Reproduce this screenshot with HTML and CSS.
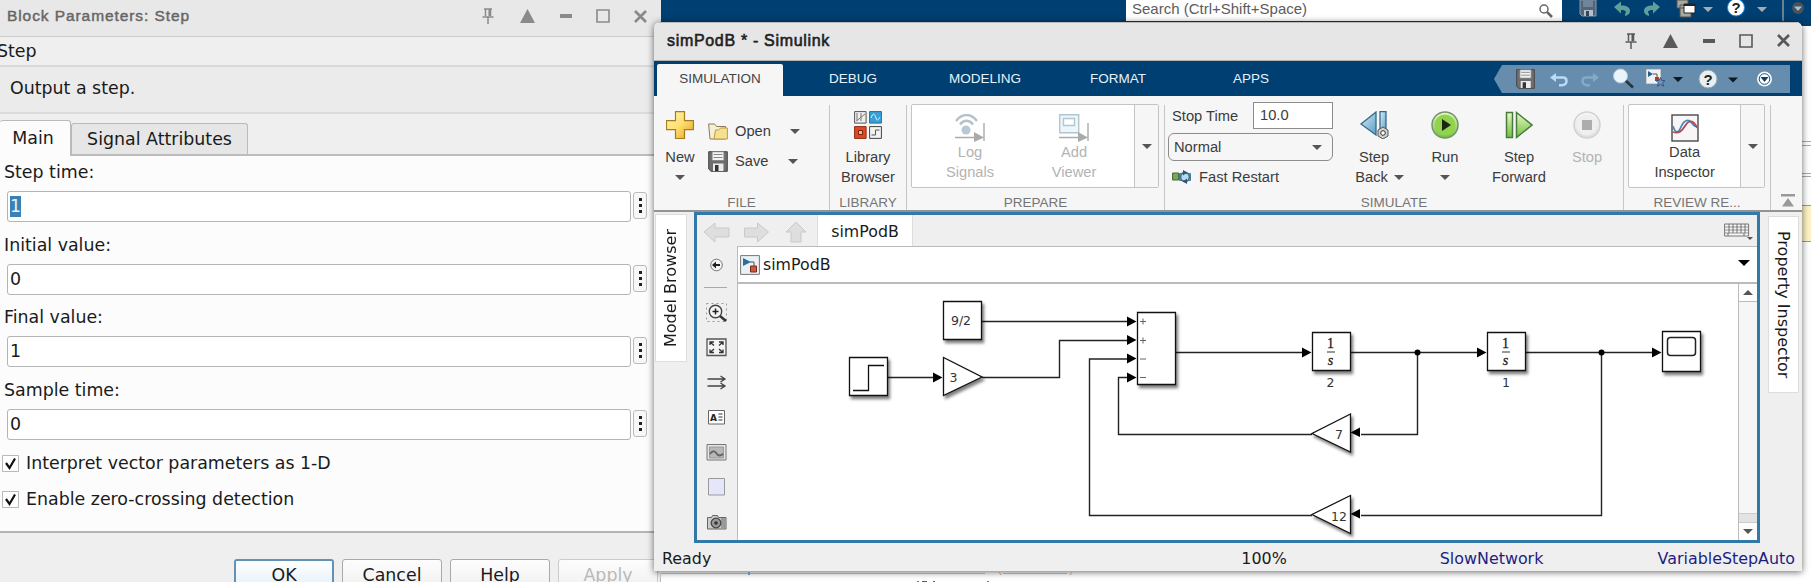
FILE: index.html
```html
<!DOCTYPE html>
<html lang="en">
<head>
<meta charset="utf-8">
<title>simPodB * - Simulink</title>
<link rel="stylesheet" href="styles.css">
</head>
<body>
<svg class="defs" width="0" height="0">
  <defs>
    <linearGradient id="gold" x1="0" y1="0" x2="1" y2="1"><stop offset="0" stop-color="#fff6b8"/><stop offset=".5" stop-color="#ffdf70"/><stop offset="1" stop-color="#dca020"/></linearGradient>
    <linearGradient id="green" x1="0" y1="0" x2="0" y2="1"><stop offset="0" stop-color="#eaf7c8"/><stop offset="1" stop-color="#6fc040"/></linearGradient>
    <linearGradient id="blue" x1="0" y1="0" x2="1" y2="1"><stop offset="0" stop-color="#d8eef8"/><stop offset="1" stop-color="#5a9cc4"/></linearGradient>
    <linearGradient id="grey" x1="0" y1="0" x2="0" y2="1"><stop offset="0" stop-color="#f8f8f8"/><stop offset="1" stop-color="#dcdcdc"/></linearGradient>
    <symbol id="pin" viewBox="0 0 12 16"><path d="M2 1h8M3.500 1v7M8.500 1v7M7.200 1v7M0.500 9h11M6 9v7" fill="none" stroke="currentColor" stroke-width="1.500"/></symbol>
    <symbol id="up" viewBox="0 0 15 14"><path d="M7.500 0L15 14H0z" fill="currentColor"/></symbol>
    <symbol id="min" viewBox="0 0 12 4"><path d="M0 0h12v4H0z" fill="currentColor"/></symbol>
    <symbol id="max" viewBox="0 0 14 14"><path d="M1 1h12v12H1z" fill="none" stroke="currentColor" stroke-width="1.600"/></symbol>
    <symbol id="close" viewBox="0 0 13 13"><path d="M1 1l11 11M12 1L1 12" fill="none" stroke="currentColor" stroke-width="2.700"/></symbol>
    <symbol id="floppy" viewBox="0 0 20 21"><path d="M.7.7h18.600v19.600H3L.7 18z" fill="#6d6d72" stroke="#444"/><path d="M4 .7h12v9H4z" fill="#f3f3f3" stroke="#777"/><path d="M5.500 3.500h9M5.500 6.500h9" stroke="#888"/><path d="M5 12.500h10.500v7.500H5z" fill="#ececec"/><path d="M7 14h3.500v6H7z" fill="#333"/></symbol>
    <symbol id="undo" viewBox="0 0 18 14"><path d="M5 5h8c2.500 0 3.500 1.500 3.500 3.500S15 12.800 12 12.800H9" fill="none" stroke="currentColor" stroke-width="2.500"/><path d="M0 5L6 .5v9z" fill="currentColor"/></symbol>
  </defs>
</svg>

<div class="desktop">
  <header class="host-bar">
    <div class="host-search"><span>Search (Ctrl+Shift+Space)</span>
      <svg width="14" height="14" viewBox="0 0 14 14"><circle cx="5" cy="5" r="4" fill="none" stroke="#666" stroke-width="1.500"/><path d="M8 8l5 5" stroke="#666" stroke-width="2.500"/></svg>
    </div>
    <svg class="host-icons" width="249" height="26" viewBox="1562 0 249 26">
      <path d="M1580 0h16v16h-14l-2-2z" fill="#50667c" stroke="#8d99a5"/><path d="M1583 0h10v7h-10z" fill="#71859a"/><path d="M1584 10h9v6h-9z" fill="#b7c0c9"/><path d="M1586 11h3v5h-3z" fill="#31475e"/>
      <path d="M1614 7l7-5.500v4c6 0 9 2 9 5.500 0 2.500-2 4.500-5 5v-2c2-2 1-4-4-4v3.500z" fill="#5fa09b"/>
      <path d="M1660 7l-7-5.500v4c-6 0-9 2-9 5.500 0 2.500 2 4.500 5 5v-2c-2-2-1-4 4-4v3.500z" fill="#5fa09b"/>
      <path d="M1677 0h11v8h-11zM1680 5h11v12h-11z" fill="#a9a9a0" stroke="#555"/><path d="M1684 4h11v9h-11z" fill="#fff" stroke="#222"/><path d="M1684 4h11v2h-11z" fill="#222"/>
      <path d="M1703 7h10l-5 5zM1757 7h10l-5 5z" fill="#a9aaa9"/>
      <circle cx="1736" cy="7.500" r="8.500" fill="#fff" stroke="#168ce0"/><text x="1736" y="12.500" class="qm">?</text>
      <path d="M1783 0v21" stroke="#8d98a2" stroke-width="1.500"/>
      <circle cx="1798" cy="8" r="6" fill="#4a5158"/><path d="M1794 6.500h8l-4 4.500z" fill="#9fc3d8"/>
    </svg>
  </header>
  <div class="host-right"><i></i><i></i><i></i><b></b></div>
  <svg class="host-bottom" width="450" height="11" viewBox="654 571 450 11">
    <path d="M660.500 571v11" stroke="#bbb"/>
    <path d="M661 573.500h324M1003 573.500h64" stroke="#86a5c0"/><path d="M748 572h2v3h-2z" fill="#5d8fc0"/>
    <path d="M999 572l2 3M1072 572l-2 3" stroke="#b98a68"/>
    <path d="M917 581.500h2M987 581.500h2" stroke="#b3673f"/><path d="M922 581.500h5M933 581.500h2" stroke="#1f6fb5"/>
  </svg>

  <section class="dialog">
    <div class="dlg-title"><span>Block Parameters: Step</span>
      <div class="win-icons">
        <svg width="12" height="16"><use href="#pin"/></svg><svg width="15" height="14"><use href="#up"/></svg><svg width="12" height="4"><use href="#min"/></svg><svg width="14" height="14"><use href="#max"/></svg><svg width="13" height="13"><use href="#close"/></svg>
      </div>
    </div>
    <div class="dlg-kind">Step</div>
    <div class="dlg-desc">Output a step.</div>
    <div class="dlg-tabs"><span class="dtab active">Main</span><span class="dtab">Signal Attributes</span></div>
    <div class="dlg-form">
      <label>Step time:</label><div class="row"><span class="field"><mark>1</mark></span><span class="more"><i></i><i></i><i></i></span></div>
      <label>Initial value:</label><div class="row"><span class="field">0</span><span class="more"><i></i><i></i><i></i></span></div>
      <label>Final value:</label><div class="row"><span class="field">1</span><span class="more"><i></i><i></i><i></i></span></div>
      <label>Sample time:</label><div class="row"><span class="field">0</span><span class="more"><i></i><i></i><i></i></span></div>
      <div class="check"><svg width="17" height="17" viewBox="0 0 17 17"><path d="M.5.5h16v16H.5z" fill="#fff" stroke="#b9b9b9"/><path d="M4 8l3.500 5L13 3.500" fill="none" stroke="#111" stroke-width="2.200"/></svg>Interpret vector parameters as 1-D</div>
      <div class="check"><svg width="17" height="17" viewBox="0 0 17 17"><path d="M.5.5h16v16H.5z" fill="#fff" stroke="#b9b9b9"/><path d="M4 8l3.500 5L13 3.500" fill="none" stroke="#111" stroke-width="2.200"/></svg>Enable zero-crossing detection</div>
    </div>
    <div class="dlg-buttons"><span class="btn primary"><u>O</u>K</span><span class="btn"><u>C</u>ancel</span><span class="btn"><u>H</u>elp</span><span class="btn disabled"><u>A</u>pply</span></div>
  </section>

  <section class="sim">
    <div class="sim-title"><span>simPodB * - Simulink</span>
      <div class="win-icons">
        <svg width="12" height="16"><use href="#pin"/></svg><svg width="15" height="14"><use href="#up"/></svg><svg width="12" height="4"><use href="#min"/></svg><svg width="14" height="14"><use href="#max"/></svg><svg width="13" height="13"><use href="#close"/></svg>
      </div>
    </div>
    <nav class="tabs">
      <span class="tab active">SIMULATION</span><span class="tab t-debug">DEBUG</span><span class="tab t-model">MODELING</span><span class="tab t-format">FORMAT</span><span class="tab t-apps">APPS</span>
      <svg class="quick" width="296" height="28" viewBox="1494 65 296 28">
        <path d="M1494 79l8-14h288v28h-288z" fill="#668dae"/>
        <use href="#floppy" x="1515" y="69" width="21" height="20"/>
        <g color="#b9dcf5"><use href="#undo" x="1550" y="72" width="18" height="15"/></g>
        <g color="#82abc9" transform="translate(3181 0) scale(-1 1)"><use href="#undo" x="1582" y="72" width="18" height="15"/></g>
        <path d="M1625 80l8 7.500" stroke="#27333d" stroke-width="2.600"/><circle cx="1620.500" cy="76" r="7" fill="#e9f4fb" stroke="#b8c9d5"/>
        <path d="M1646.500 69.500h14v14h-14z" fill="#f1f1f1" stroke="#ccc"/><path d="M1648 71l5 3-5 3z" fill="#285c8a"/><path d="M1653 74h4v3" fill="none" stroke="#555"/><path d="M1655 77h4v4h-4z" fill="#b43a24"/><path d="M1660.500 77.500l1.300 3h3.200l-2.300 2.300 1 3.500-3.200-2-3.200 2 1-3.500-2.300-2.300h3.200z" fill="#7093b7" stroke="#36597e"/>
        <path d="M1673 77h10l-5 5zM1728 77.500h10l-5 5z" fill="#101820"/>
        <circle cx="1708" cy="79" r="9" fill="#e8eef2" stroke="#91a8b9"/><text x="1708" y="84.500" class="qm">?</text>
        <circle cx="1764.500" cy="79" r="7.500" fill="#f2f8fc"/><circle cx="1764.500" cy="79" r="5.300" fill="#fff" stroke="#19567f" stroke-width="1"/><path d="M1760.500 77h8l-4 5z" fill="#123f62"/>
      </svg>
    </nav>

    <div class="ribbon">
      <div class="group g-file">
        <div class="tools">
          <div class="tool new"><svg width="28" height="28" viewBox="0 0 28 28"><path d="M9.500 .7h9v9h9v9h-9v8.800h-9v-8.800h-9v-9h9z" fill="url(#gold)" stroke="#a77b20" stroke-width="1.200"/></svg><span>New</span><i class="caret"></i></div>
          <div class="lines">
            <div><svg width="20" height="17" viewBox="0 0 20 17"><path d="M.6 1h6l2 2.500h9V16H2z" fill="#f5efd6" stroke="#8b7b55"/><path d="M6 16L7.500 7h3l2-2h6.900v11z" fill="#f4e08e" stroke="#c09a45"/></svg><span>Open</span><i class="caret"></i></div>
            <div><svg width="20" height="21"><use href="#floppy"/></svg><span>Save</span><i class="caret c2"></i></div>
          </div>
        </div>
        <div class="glabel">FILE</div>
      </div>
      <div class="group g-lib">
        <div class="tools"><div class="tool lib"><svg width="28" height="28" viewBox="0 0 28 28"><path d="M.6.6h11.500v11.500H.6z" fill="#eee" stroke="#555"/><path d="M3 2v8M2.500 10L11 3M7 2v8" stroke="#777" fill="none"/><path d="M15.600.6h11.800v11.500H15.600z" fill="#38a0d6" stroke="#1f6f9d"/><path d="M17 7c2-6 4-4 5 0s3 1 4-1" fill="none" stroke="#dff3ff"/><path d="M.6 15.600h11.500v11.800H.6z" fill="#dc4a24" stroke="#8f2b12"/><path d="M4.500 19.500h4v4h-4z" fill="#f6b49b" stroke="#7b220c"/><path d="M15.600 15.600h11.800v11.800H15.600z" fill="#f3f3f3" stroke="#444"/><path d="M17.500 24h4v-5h4" fill="none" stroke="#555"/></svg><span>Library<br>Browser</span></div></div>
        <div class="glabel">LIBRARY</div>
      </div>
      <div class="group g-prep">
        <div class="gallery">
          <div class="gitem g-log"><svg width="30" height="28" viewBox="0 0 30 28"><path d="M1 7c6-8 15-8 21 0M5 10.500c4-5 9-5 13 0" fill="none" stroke="#b4c0cb" stroke-width="2.400"/><circle cx="11" cy="16" r="4.500" fill="#b9c8d5"/><path d="M0 23.500h24M29 9v18" stroke="#aaa" stroke-width="1.400"/><path d="M19 18l10 5.500-10 4.500z" fill="#aaa"/></svg><span>Log<br>Signals</span></div>
          <div class="gitem g-add"><svg width="30" height="28" viewBox="0 0 30 28"><path d="M.7.7h19v18H.7z" fill="#eef6fa" stroke="#b0c6d2" stroke-width="1.400"/><path d="M4.500 4.500h11v7h-11z" fill="#fff" stroke="#b0c6d2" stroke-width="1.400"/><path d="M0 23.500h24M29 9v18" stroke="#aaa" stroke-width="1.400"/><path d="M19 18l10 5.500-10 4.500z" fill="#aaa"/></svg><span>Add<br>Viewer</span></div>
          <div class="gmore"><i class="caret"></i></div>
        </div>
        <div class="glabel">PREPARE</div>
      </div>
      <div class="group g-sim">
        <div class="tools">
          <div class="settings">
            <div class="stop-time"><span>Stop Time</span><span class="time-in">10.0</span></div>
            <div class="mode"><span>Normal</span><i class="caret"></i></div>
            <div class="fast"><svg width="21" height="14" viewBox="0 0 21 14"><path d="M.6 3h6v7h-6z" fill="#78a95b" stroke="#3c6630"/><path d="M7.500 3.500h11v7h-11z" fill="#b7dbed" stroke="#4e7a96"/><circle cx="13" cy="7" r="4.500" fill="none" stroke="#3f6f92" stroke-width="1.800"/><path d="M11 0l4 2.500-4 3zM15 14l-4-2.500 4-3z" fill="#2d5672"/></svg><span>Fast Restart</span></div>
          </div>
          <div class="tool step-back"><svg width="30" height="28" viewBox="0 0 30 28"><path d="M17 1v23L2 13z" fill="url(#blue)" stroke="#366a88" stroke-width="1.300"/><path d="M21 .7h6v22h-6z" fill="url(#blue)" stroke="#366a88" stroke-width="1.300"/><path d="M24 16l5 3v6l-5 3-5-3v-6z" fill="#d0d0d0" stroke="#555"/><circle cx="24" cy="22" r="2.300" fill="#fff" stroke="#333"/></svg><span>Step</span><span class="with-caret">Back<i class="caret"></i></span></div>
          <div class="tool run"><svg width="28" height="28" viewBox="0 0 28 28"><circle cx="14" cy="14" r="13" fill="url(#green)" stroke="#77936a" stroke-width="1.500"/><circle cx="14" cy="14" r="10.500" fill="#92d34c"/><path d="M11 8l9 6-9 6z" fill="#1c2517"/></svg><span>Run</span><i class="caret"></i></div>
          <div class="tool fwd"><svg width="28" height="28" viewBox="0 0 28 28"><path d="M1.500 1.500h6v25h-6zM11.500 1.500v25L27 14z" fill="url(#green)" stroke="#477c3e" stroke-width="1.500"/></svg><span>Step<br>Forward</span></div>
          <div class="tool stop"><svg width="28" height="28" viewBox="0 0 28 28"><circle cx="14" cy="14" r="13" fill="url(#grey)" stroke="#d2d2d2" stroke-width="1.500"/><circle cx="14" cy="14" r="10.500" fill="#efefef"/><path d="M9 9h10v10H9z" fill="#adadad"/></svg><span>Stop</span></div>
        </div>
        <div class="glabel">SIMULATE</div>
      </div>
      <div class="group g-rev">
        <div class="gallery">
          <div class="gitem g-data"><svg width="28" height="28" viewBox="0 0 28 28"><path d="M1 1h26v26H1z" fill="#f7f5f5" stroke="#555" stroke-width="1.500"/><path d="M2 12c2 7 5 8 8 1s7-8 10-5 3 5 6 4" fill="none" stroke="#4689bc" stroke-width="1.800"/><path d="M2 18c6 2 9-1 12-6s8-8 12 2" fill="none" stroke="#b44b51" stroke-width="1.800"/></svg><span>Data<br>Inspector</span></div>
          <div class="gmore"><i class="caret"></i></div>
        </div>
        <div class="glabel">REVIEW RE...</div>
      </div>
      <svg class="collapse" width="14" height="13" viewBox="0 0 14 13"><path d="M0 0h14v2.500H0zM7 4l6 8.500H1z" fill="#999"/></svg>
    </div>

    <div class="work">
      <aside class="side left"><span>Model Browser</span></aside>
      <main class="editor">
        <div class="nav-row">
          <svg width="120" height="31" viewBox="697 215 120 31"><g fill="#dedede" stroke="#c9c9c9"><path d="M704 232l11-9v5h14v9h-14v5zM768.500 232l-11-9v5h-13v9h13v5zM796 222l10 10h-5v10h-10v-10h-5z"/></g></svg>
          <span class="file-tab">simPodB</span>
          <svg class="keys" width="30" height="18" viewBox="0 0 30 18"><path d="M.6 1h24v12H.6z" fill="#f5f5f5" stroke="#777"/><path d="M1 4h23M1 7h23M1 10h23" stroke="#888" stroke-width=".9"/><path d="M5 1v9M9 1v9M13 1v9M17 1v9M21 1v9M4 10v3M20 10v3" stroke="#666" stroke-width=".9"/><path d="M23 14h6l-3 3z" fill="#555"/></svg>
        </div>
        <div class="edit-body">
          <svg class="palette" width="40" height="293" viewBox="697 246 40 293" fill="none">
            <circle cx="716.500" cy="265" r="5.800" fill="#f6f6f6" stroke="#777"/><path d="M720 265h-5" stroke="#222" stroke-width="2"/><path d="M712 265l4-3.500v7z" fill="#222"/>
            <path d="M704 287.500h23" stroke="#aaa"/>
            <path d="M706.500 303.500h20v18h-20z" stroke="#999" stroke-dasharray="2 3"/><circle cx="715.500" cy="311.500" r="6.200" fill="#f5f5f5" stroke="#444" stroke-width="1.400"/><path d="M712.500 311.500h6M715.500 308.500v6" stroke="#222" stroke-width="1.500"/><path d="M720 316l6 5" stroke="#333" stroke-width="2.400"/>
            <path d="M707 339h19v16.500h-19z" fill="#f4f4f4" stroke="#555" stroke-width="1.300"/><path d="M710 345v-3h4M710 342l4 3.500M723 345v-3h-4M723 342l-4 3.500M710 349.500v3h4M710 352.500l4-3.500M723 349.500v3h-4M723 352.500l-4-3.500" stroke="#333" stroke-width="1.300"/>
            <path d="M707.500 379h17M707.500 386h17M720.500 376l4.500 3-4.500 3M720.500 383l4.500 3-4.500 3" stroke="#444" stroke-width="1.300"/>
            <path d="M708.500 410.500h16v13.500h-16z" fill="#fff" stroke="#666"/><text x="710" y="421" class="aa">A</text><path d="M718.500 414h4M718.500 417h4M718.500 420h4" stroke="#333"/>
            <path d="M707 444.500h19v15.500h-19z" fill="#e5e5e5" stroke="#777"/><path d="M709.500 447h14v11h-14z" fill="#b8b8b8" stroke="#999"/><path d="M710 454c3-4 5-3 7 0s4 1 6 0" stroke="#666" stroke-width="2"/>
            <path d="M708.500 478.500h16v16.500h-16z" fill="#e6e6fa" stroke="#999"/>
            <path d="M707.500 517.500h4l1-2h5l1 2h7.500v11.500h-18.500z" fill="#ccc" stroke="#666"/><path d="M721 518h4v10h-4z" fill="#999"/><circle cx="716" cy="523" r="4.800" fill="#999" stroke="#444" stroke-width="1.300"/><circle cx="716" cy="523" r="1.800" fill="#333"/>
          </svg>
          <div class="sheet">
            <div class="crumb">
              <svg width="20" height="20" viewBox="0 0 20 20"><path d="M.6.6h18.800v18.800H.6z" fill="#eaf2f6" stroke="#777"/><path d="M3 3l8 4-8 4z" fill="#2c6f9f"/><path d="M10 7h4v4" fill="none" stroke="#555"/><path d="M10.500 11h6v6h-6z" fill="#cc5a3f" stroke="#782a17"/></svg>
              <span>simPodB</span><i class="caret black"></i>
            </div>
            <div class="canvas-row">
              <svg class="canvas" width="1000" height="256" viewBox="738 284 1000 256">
                <g class="wires">
                  <path d="M982 321.500h146M888 377.500h46M982 377.500h77.500v-37h68M1176 352.500h128M1351 352.500h128M1526 352.500h128M1417.500 352.500v82H1361M1601.500 352.500v163H1361M1312 434.500h-193.500v-57h10M1312 515.500H1089.500V359h38"/>
                </g>
                <g fill="#000">
                  <path d="M1127 316.500l9.500 5-9.500 5zM1127 335l9.500 5-9.500 5zM1127 353.500l9.500 5-9.500 5zM1127 372.500l9.500 5-9.500 5zM933 372.500l9.500 5-9.500 5zM1302 347.500l9.500 5-9.500 5zM1477 347.500l9.500 5-9.500 5zM1652 347.500l9.500 5-9.500 5zM1360 427.500l-9.500 5 9.500 4.500zM1360 509l-9.500 5 9.500 4.500z"/>
                  <circle cx="1417.500" cy="352.500" r="3"/><circle cx="1601.500" cy="352.500" r="3"/>
                </g>
                <g class="blocks">
                  <path d="M943.500 301.500h38v38h-38z"/><path d="M849.500 357.500h38v38h-38z"/><path d="M943.500 357.500v38L982 377z"/>
                  <path d="M1137.500 312.500h38v72h-38z"/><path d="M1312.500 332.500h38v38h-38z"/><path d="M1487.500 332.500h38v38h-38z"/><path d="M1662.500 331.500h38v40h-38z"/>
                  <path d="M1350.500 414v38L1312 433.500z"/><path d="M1350.500 495.500v38L1312 514.500z"/>
                </g>
                <path d="M853 390.500h15.500v-25H884" fill="none" stroke="#111" stroke-width="1.300"/>
                <rect x="1667.500" y="337.500" width="28" height="18" rx="3" fill="#fff" stroke="#222" stroke-width="1.500"/>
                <path d="M1327 352h8M1502 352h8" stroke="#333"/>
                <path d="M1140 321.500h6M1143 318.500v6M1140 340.500h6M1143 337.500v6M1140 359h6M1140 377.500h6" stroke="#666"/>
                <g class="btext"><text x="961" y="324.500">9/2</text><text x="953.500" y="382">3</text><text x="1330.500" y="387">2</text><text x="1506" y="387">1</text><text x="1339" y="439">7</text><text x="1339" y="520.500">12</text></g>
                <g class="frac"><text x="1330.500" y="347.500">1</text><text x="1505.500" y="347.500">1</text><text x="1330.500" y="364.500" class="it">s</text><text x="1505.500" y="364.500" class="it">s</text></g>
              </svg>
              <div class="scroll"><span class="sb"><i class="tri up"></i></span><span class="track"></span><span class="grip"></span><span class="sb"><i class="tri"></i></span></div>
            </div>
          </div>
        </div>
      </main>
      <aside class="side right"><span>Property Inspector</span></aside>
    </div>
    <footer class="status"><span class="ready">Ready</span><span class="zoom">100%</span><span class="link net">SlowNetwork</span><span class="link">VariableStepAuto</span></footer>
  </section>
</div>
</body>
</html>
```
FILE: styles.css
```css
* { box-sizing: border-box; }
body { margin: 0; overflow: hidden; font-family: "DejaVu Sans", sans-serif; color: #1a1a1a; }
svg { display: block; flex: none; }
.defs { position: absolute; }
.desktop { position: relative; width: 1811px; height: 582px; overflow: hidden; background: #fff; }
.qm { font: bold 15px "Liberation Sans", sans-serif; text-anchor: middle; fill: #222; }

/* Host application behind the windows */
.host-bar { height: 26px; margin-left: 661px; background: #003f72; display: flex; align-items: flex-start; }
.host-search { margin-left: 465px; width: 436px; height: 21px; background: #fff; display: flex; align-items: flex-start; justify-content: space-between; padding: 0 9px 0 6px; font: 15px/18px "Liberation Sans", sans-serif; color: #5c5c5c; }
.host-search svg { margin-top: 4px; }
.host-right { margin-left: 1802px; display: flex; flex-direction: column; padding-top: 115px; }
.host-right i { height: 29px; border: 1px solid #aaa; border-width: 1px 0; margin-bottom: 2px; }
.host-right i:first-child { height: 1px; border-bottom: 0; margin-bottom: 3px; }
.host-right i:nth-child(3) { height: 29px; border-bottom: 0; margin-bottom: 0; }
.host-right b { height: 37px; background: #fdf3c4; border: 1px solid #999; border-width: 1px 0; }
.host-bottom { position: absolute; left: 654px; top: 571px; z-index: 2; }

/* Block parameters dialog */
.dialog { position: absolute; left: 0; top: 0; width: 661px; height: 582px; background: #efefef; display: flex; flex-direction: column; font-size: 17.400px; }
.dlg-title { height: 37px; flex: none; background: #e8e8e8; border-bottom: 1px solid #ccc; display: flex; align-items: center; justify-content: space-between; padding: 0 14px 4px 7px; font: 15.500px "Liberation Sans", sans-serif; color: #666; letter-spacing: .92px; -webkit-text-stroke: .45px #666; }
.win-icons { display: flex; align-items: center; gap: 25px; color: #8a8a8a; }
.win-icons svg:first-child { margin-right: 1px; }
.win-icons svg:nth-child(n+4) { margin-left: -1px; }
.dlg-kind { height: 30px; flex: none; line-height: 28px; text-indent: -3px; border-bottom: 2px solid #dadada; }
.dlg-desc { height: 47px; flex: none; line-height: 43px; padding-left: 10px; background: #ebebeb; border-bottom: 2px solid #dcdcdc; }
.dlg-tabs { height: 42px; flex: none; display: flex; align-items: flex-end; border-bottom: 2px solid #bdbdbd; }
.dtab { height: 31px; line-height: 31px; width: 177px; text-align: center; background: #e6e6e6; border: 1.500px solid #bababa; border-bottom: 0; border-radius: 3px 3px 0 0; }
.dtab.active { width: 71px; height: 36px; line-height: 35px; margin-bottom: -2px; background: #fcfcfc; padding-right: 4px; border-left: 0; }
.dlg-form { height: 377px; flex: none; background: #fcfcfc; border-bottom: 2px solid #b4b4b4; }
.dlg-form label { display: block; height: 35px; line-height: 33px; padding-left: 4px; }
.row { display: flex; gap: 2px; padding-left: 7px; height: 31px; margin-bottom: 6.500px; }
.row:nth-of-type(4) { margin-bottom: 2px; }
.field { width: 624px; border: 1.500px solid #b4b4b4; border-radius: 3px; background: #fff; line-height: 28px; padding-left: 2px; }
.field mark { display: inline-block; line-height: 21px; background: #3a80b4; color: #e4f2fb; }
.more { width: 14px; height: 27px; margin-top: 1px; border: 1px solid #bbb; border-radius: 3px; background: #f7f7f7; display: flex; flex-direction: column; gap: 3px; align-items: center; justify-content: center; }
.more i { width: 3px; height: 3px; background: #222; }
.check { display: flex; align-items: center; gap: 7px; height: 36px; padding: 7px 0 0 2px; }
.dlg-buttons { display: flex; gap: 8px; padding: 26px 0 0 234px; }
.btn { width: 100px; height: 34px; flex: none; border: 1px solid #a9a9a9; border-radius: 3px; background: linear-gradient(#fdfdfd, #eee); text-align: center; line-height: 30px; }
.btn.primary { border: 2px solid #6293b7; background: linear-gradient(#fff, #e0eff7); line-height: 28px; }
.btn.disabled { color: #b9b9b9; border-color: #ccc; }
u { text-underline-offset: 2px; text-decoration-thickness: 1px; }

/* Simulink window */
.sim { position: absolute; left: 654px; top: 22px; width: 1148px; height: 549px; background: #efefef; border-radius: 6px 6px 0 0; overflow: hidden; display: flex; flex-direction: column; box-shadow: 0 1px 7px rgba(0,0,0,.6); }
.sim-title { height: 39px; flex: none; background: #e6e6e6; border-top: 1px solid #bbb; border-bottom: 1px solid #b4b4b4; display: flex; align-items: center; justify-content: space-between; padding: 0 12px 2px 13px; font: 16px "Liberation Sans", sans-serif; color: #222; letter-spacing: .68px; -webkit-text-stroke: .6px #222; }
.sim-title .win-icons { color: #595959; }
.tabs { height: 35px; flex: none; background: #003f72; display: flex; align-items: flex-end; padding-left: 3px; font: 13.500px/30px "Liberation Sans", sans-serif; color: #e6f2fa; }
.tab { width: 100px; height: 32px; text-align: center; }
.tab.active { width: 126px; background: #f6f6f6; color: #444; border-radius: 2px 2px 0 0; }
.t-debug { margin-left: 20px; }
.t-model { margin-left: 32px; }
.t-format { margin-left: 33px; }
.t-apps { margin-left: 33px; }
.quick { margin: 0 12px 3px auto; }
.ribbon { height: 116px; flex: none; background: #f6f6f6; border-bottom: 2px solid #8f9499; display: flex; font: 14.700px/20px "Liberation Sans", sans-serif; color: #3c3c3c; }
.group { display: flex; flex-direction: column; background: linear-gradient(#c6c6c6, #c6c6c6) right bottom / 1px 105px no-repeat; }
.g-file { width: 176px; } .g-lib { width: 77px; } .g-prep { width: 258px; } .g-sim { width: 459px; } .g-rev { width: 147px; }
.tools { height: 96px; display: flex; }
.glabel { height: 18px; line-height: 21px; padding-right: 1px; text-align: center; font-size: 13.500px; color: #747474; white-space: nowrap; }
.tool { display: flex; flex-direction: column; align-items: center; text-align: center; padding-top: 15px; flex: none; }
.tool svg { margin-bottom: 8px; }
.caret { display: block; width: 0; height: 0; border: 5px solid transparent; border-top-color: #555; border-bottom: 0; flex: none; }
.tool > .caret { margin-top: 8px; }
.new { width: 52px; }
.lines { padding: 20px 0 0 2px; }
.lines div { display: flex; align-items: center; height: 30px; }
.lines span { margin-left: 7px; width: 55px; }
.lines .caret.c2 { margin-left: -2px; }
.lib { width: 76px; }
.gallery { height: 84px; margin: 8px 6px 4px 4px; border: 1px solid #c4c4c4; background: #fff; display: flex; color: #b3b3b3; border-radius: 2px; }
.gitem { display: flex; flex-direction: column; align-items: center; padding-top: 9px; text-align: center; width: 104px; }
.g-log { margin-left: 6px; }
.g-data { width: 112px; color: #3c3c3c; }
.gmore { margin-left: auto; border-left: 1px solid #c4c4c4; width: 24px; background: #f6f6f6; display: flex; align-items: center; justify-content: center; }
.settings { width: 169px; padding: 6px 0 0 3px; }
.stop-time { display: flex; align-items: center; justify-content: space-between; padding-left: 4px; height: 27px; margin-right: 1px; }
.time-in { width: 80px; height: 27px; border: 1px solid #8c8c8c; background: #fff; padding-left: 6px; line-height: 25px; }
.mode { height: 28px; width: 165px; margin-top: 4px; border: 1.500px solid #8c8c8c; border-radius: 6px; display: flex; align-items: center; justify-content: space-between; padding: 0 10px 0 5px; }
.fast { display: flex; align-items: center; gap: 6px; padding-left: 4px; height: 32px; }
.step-back { width: 80px; }
.with-caret { display: flex; align-items: center; gap: 6px; margin-left: 11px; }
.run { width: 62px; }
.fwd { width: 86px; }
.stop { width: 50px; color: #b3b3b3; }
.collapse { margin: 98px 0 0 10px; }

.work { flex: none; height: 332px; display: flex; }
.side { display: flex; align-items: flex-start; }
.side span { writing-mode: vertical-rl; background: #fff; border: 1px solid #ddd; font-size: 16px; text-align: center; }
.side.left { width: 40px; padding: 2px 0 0 1px; }
.side.left span { transform: rotate(180deg); width: 32px; height: 148px; line-height: 29px; }
.side.right { width: 42px; padding: 4px 0 0 8px; }
.side.right span { width: 31px; height: 177px; line-height: 29px; }
.editor { width: 1066px; height: 331px; border: 3px solid #3279aa; display: flex; flex-direction: column; flex: none; }
.nav-row { height: 31px; display: flex; flex: none; font-size: 15.800px; }
.file-tab { width: 96px; background: #fff; border-left: 1px solid #ddd; border-right: 1px solid #ddd; line-height: 33px; text-align: center; }
.keys { margin: 8px 3px 0 auto; }
.edit-body { display: flex; flex: none; height: 294px; }
.sheet { width: 1020px; border-left: 1px solid #bbb; border-top: 1px solid #bbb; flex: none; background: #fff; }
.crumb { height: 37px; display: flex; align-items: center; gap: 3px; padding: 0 7px 0 2px; font-size: 15.800px; border-bottom: 2px solid #bbb; }
.crumb .caret { margin-left: auto; margin-bottom: 3px; }
.caret.black { border-width: 6px 6px 0; border-top-color: #000; }
.canvas-row { display: flex; }
.scroll { width: 19px; height: 256px; border-left: 1px solid #bbb; background: #f6f6f6; display: flex; flex-direction: column; }
.sb { height: 17px; display: flex; align-items: center; justify-content: center; background: #fdfdfd; }
.track { flex: 1; border-top: 1px solid #bbb; }
.grip { height: 10px; background: #e3e3e3; border: 1px solid #ccc; border-width: 1px 0; }
.tri { border: 5px solid transparent; border-top-color: #555; border-bottom: 0; }
.tri.up { border-top: 0; border-bottom: 5px solid #555; }
.wires path { fill: none; stroke: #222; stroke-width: 1.400; }
.blocks path { fill: #fff; stroke: #111; stroke-width: 1.300; filter: drop-shadow(2px 3px 1.500px rgba(0,0,0,.5)); }
.btext { font: 12.500px "DejaVu Sans", sans-serif; text-anchor: middle; fill: #333; }
.frac { font: 14px "Liberation Serif", serif; text-anchor: middle; fill: #222; stroke: #222; stroke-width: .3px; }
.frac .it { font-style: italic; }
.aa { font: bold 9px "DejaVu Sans", sans-serif; fill: #222; }
.status { flex: 1; display: flex; align-items: center; font-size: 15.900px; padding: 1px 7px 0 8px; }
.zoom { margin-left: 530px; }
.link { color: #1e1e82; margin-left: auto; }
.link.net { margin-left: 153px; }
```
